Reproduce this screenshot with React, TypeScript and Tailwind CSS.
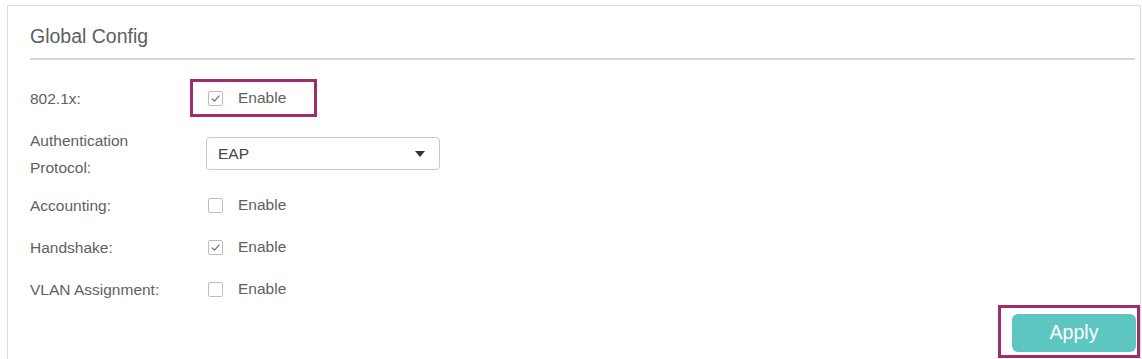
import React from "react";

const font = { fontFamily: '"Liberation Sans", Arial, sans-serif' };

const Check = ({ checked }: { checked: boolean }) => (
    <span className="w-[15px] h-[15px] border border-[#bdbdbd] rounded-[2px] bg-white flex items-center justify-center shrink-0">
        {checked && (
            <svg width="11" height="11" viewBox="0 0 11 11">
                <path d="M1.8 5.6 L4.4 8.2 L9.4 2.6" fill="none" stroke="#6e6e6e" strokeWidth="1.2" />
            </svg>
        )}
    </span>
);

const EnableBox = ({ checked }: { checked: boolean }) => (
    <div className="flex items-center gap-[15px]">
        <Check checked={checked} />
        <span className="text-[15.5px] text-[#616161]">Enable</span>
    </div>
);

const Label = ({ children }: { children: React.ReactNode }) => (
    <div className="w-[160px] shrink-0 text-[15.5px] text-[#616161] leading-[27px] pr-[18px]">{children}</div>
);

export default function App() {
    return (
        <div className="bg-white w-[1142px] h-[359px] overflow-hidden pt-[5px]" style={font}>
            <div className="ml-[7px] w-[1134px] h-[400px] border border-b-0 border-[#dcdcdc] pl-[22px]">
                <div className="h-[54px] pt-[19px] mr-[5px] border-b-2 border-[#d6d6d6]">
                    <h1 className="text-[19.5px] leading-[22px] text-[#5e5e5e]">Global Config</h1>
                </div>

                <div className="mt-[19px] h-[38px] flex items-center">
                    <Label>802.1x:</Label>
                    <div className="h-[38px] w-[127px] border-[3px] border-[#a02c6c] pl-[15px] flex items-center">
                        <EnableBox checked={true} />
                    </div>
                </div>

                <div className="h-[67px] pt-[6px] flex items-center">
                    <div className="w-[160px] shrink-0 text-[15.5px] text-[#616161] leading-[27px] pr-[50px]">
                        Authentication Protocol:
                    </div>
                    <div className="ml-[16px] w-[234px] h-[33px] border border-[#c9c9c9] rounded-[4px] flex items-center justify-between pl-[11px] pr-[14px]">
                        <span className="text-[15.5px] text-[#444]">EAP</span>
                        <svg width="10" height="6" viewBox="0 0 10 6">
                            <path d="M0 0 L10 0 L5 6 Z" fill="#333" />
                        </svg>
                    </div>
                </div>

                <div className="h-[42px] flex items-center">
                    <Label>Accounting:</Label>
                    <div className="pl-[18px]">
                        <EnableBox checked={false} />
                    </div>
                </div>

                <div className="h-[42px] flex items-center">
                    <Label>Handshake:</Label>
                    <div className="pl-[18px]">
                        <EnableBox checked={true} />
                    </div>
                </div>

                <div className="h-[37px] pt-[5px] flex items-center">
                    <Label>VLAN Assignment:</Label>
                    <div className="pl-[18px]">
                        <EnableBox checked={false} />
                    </div>
                </div>

                <div className="flex justify-end">
                    <div className="w-[142px] h-[53px] border-[3px] border-[#a02c6c] pl-[11px] pr-[1px] pt-[6px]">
                        <button className="w-[124px] h-[38px] rounded-[6px] bg-[#5ec6c1] text-white text-[19.5px] flex items-center justify-center">
                            Apply
                        </button>
                    </div>
                </div>
            </div>
        </div>
    );
}
